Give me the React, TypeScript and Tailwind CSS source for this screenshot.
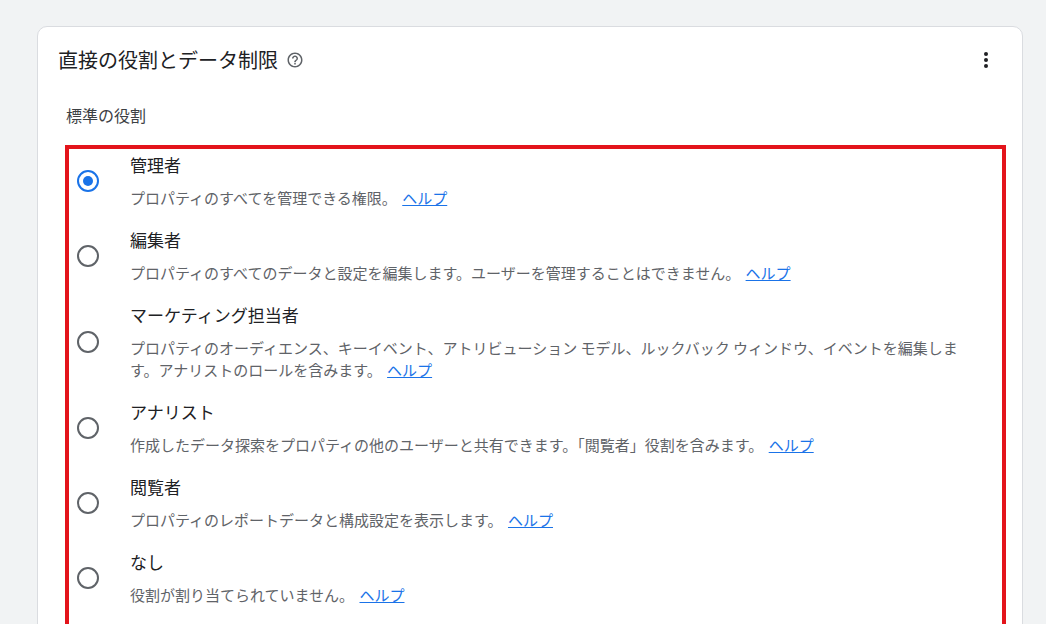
import React from "react";

const rows = [
  { t: "管理者", d: "プロパティのすべてを管理できる権限。", on: true },
  { t: "編集者", d: "プロパティのすべてのデータと設定を編集します。ユーザーを管理することはできません。" },
  { t: "マーケティング担当者", d: "プロパティのオーディエンス、キーイベント、アトリビューション モデル、ルックバック ウィンドウ、イベントを編集します。アナリストのロールを含みます。" },
  { t: "アナリスト", d: "作成したデータ探索をプロパティの他のユーザーと共有できます。「閲覧者」役割を含みます。" },
  { t: "閲覧者", d: "プロパティのレポートデータと構成設定を表示します。" },
  { t: "なし", d: "役割が割り当てられていません。" },
];

export default function App() {
  return (
    <div className="w-[1046px] h-[624px] overflow-hidden bg-[#f1f3f4] pt-[26px] pl-[37px] pr-[23px]" style={{ fontFamily: '"Noto Sans CJK JP", Roboto, sans-serif' }}>
      <div className="bg-white rounded-t-[10px] border border-[#dadce0] h-[700px] px-[20px]">
        <div className="flex items-center justify-between pt-[4px] h-[62px]">
          <div className="flex items-center gap-[8px] text-[20px] text-[#202124]">
            直接の役割とデータ制限
            <svg width="18" height="18" viewBox="0 0 24 24" fill="#5f6368"><path d="M11 18h2v-2h-2v2zm1-16C6.48 2 2 6.48 2 12s4.48 10 10 10 10-4.48 10-10S17.52 2 12 2zm0 18c-4.41 0-8-3.59-8-8s3.59-8 8-8 8 3.59 8 8-3.59 8-8 8zm0-14c-2.21 0-4 1.79-4 4h2c0-1.1.9-2 2-2s2 .9 2 2c0 2-3 1.75-3 5h2c0-2.25 3-2.5 3-5 0-2.21-1.79-4-4-4z"/></svg>
          </div>
          <svg width="24" height="24" viewBox="0 0 24 24" fill="#202124" className="mr-[4px]"><circle cx="12" cy="6" r="2"/><circle cx="12" cy="12" r="2"/><circle cx="12" cy="18" r="2"/></svg>
        </div>
        <div className="pl-[8px] text-[16px] text-[#3c4043] h-[56px] pt-[14px]">標準の役割</div>
        <div className="ml-[7px] mr-[-4px] border-[4px] border-[#e3141b] pt-[4px] pl-[3px] pr-[17px]">
          {rows.map((r) => (
            <div key={r.t} className="flex items-center mb-[19px]">
              <div className="w-[58px] flex justify-start pl-[5px]">
                <div className={`w-[22px] h-[22px] rounded-full border-2 flex items-center justify-center ${r.on ? "border-[#1a73e8]" : "border-[#5f6368]"}`}>
                  {r.on && <div className="w-[10px] h-[10px] rounded-full bg-[#1a73e8]" />}
                </div>
              </div>
              <div className="flex-1">
                <div className="text-[17px] leading-[24px] text-[#202124]">{r.t}</div>
                <div className="mt-[10px] text-[15px] leading-[22px] text-[#5f6368]">
                  {r.d} <a className="text-[#1a73e8] underline ml-[2px]">ヘルプ</a>
                </div>
              </div>
            </div>
          ))}
        </div>
      </div>
    </div>
  );
}
